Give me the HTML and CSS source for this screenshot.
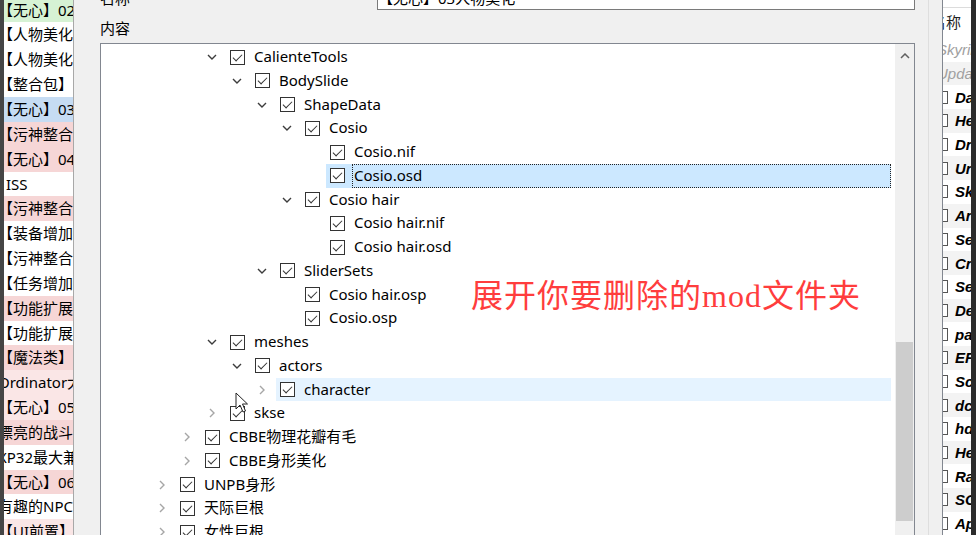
FILE: index.html
```html
<!doctype html>
<html lang="zh-CN">
<head>
  <meta charset="utf-8" />
  <meta name="viewport" content="width=device-width,initial-scale=1" />
  <title>编辑 mod 内容</title>
  <link rel="stylesheet" href="styles.css">
</head>
<body>
  <div class="window">
    <aside class="mod-list">
      <div class="mod-rows">
        <div class="mod green">【无心】02人物美化</div>
        <div class="mod">【人物美化】CBBE</div>
        <div class="mod">【人物美化】UNP</div>
        <div class="mod">【整合包】</div>
        <div class="mod blue">【无心】03人物美化</div>
        <div class="mod pink">【污神整合】</div>
        <div class="mod pink">【无心】04</div>
        <div class="mod"><span class="shift">ISS</span></div>
        <div class="mod pink">【污神整合】</div>
        <div class="mod">【装备增加】</div>
        <div class="mod">【污神整合】</div>
        <div class="mod">【任务增加】</div>
        <div class="mod pink">【功能扩展】</div>
        <div class="mod">【功能扩展】</div>
        <div class="mod pink">【魔法类】</div>
        <div class="mod pale">Ordinator大修</div>
        <div class="mod pale">【无心】05</div>
        <div class="mod pink">漂亮的战斗</div>
        <div class="mod">XP32最大兼容</div>
        <div class="mod pink">【无心】06</div>
        <div class="mod">有趣的NPC</div>
        <div class="mod pale">【UI前置】</div>
      </div>
    </aside>

    <main class="editor">
      <div class="name-field">
        <label>名称</label>
        <div class="combo">
          <span>【无心】03人物美化</span>
          <svg width="10" height="6" viewBox="0 0 10 6"><path d="M1 1 L5 5 L9 1" fill="none" stroke="#555" stroke-width="1.2"/></svg>
        </div>
      </div>
      <div class="field-label">内容</div>

      <div class="tree-box">
        <div class="tree">
          <div class="row l2"><span class="twisty open"><svg width="10" height="6" viewBox="0 0 10 6"><path d="M1 1 L5 5 L9 1"/></svg></span><span class="item"><span class="cb"></span><span class="name">CalienteTools</span></span></div>
          <div class="row l3"><span class="twisty open"><svg width="10" height="6" viewBox="0 0 10 6"><path d="M1 1 L5 5 L9 1"/></svg></span><span class="item"><span class="cb"></span><span class="name">BodySlide</span></span></div>
          <div class="row l4"><span class="twisty open"><svg width="10" height="6" viewBox="0 0 10 6"><path d="M1 1 L5 5 L9 1"/></svg></span><span class="item"><span class="cb"></span><span class="name">ShapeData</span></span></div>
          <div class="row l5"><span class="twisty open"><svg width="10" height="6" viewBox="0 0 10 6"><path d="M1 1 L5 5 L9 1"/></svg></span><span class="item"><span class="cb"></span><span class="name">Cosio</span></span></div>
          <div class="row l6"><span class="twisty"></span><span class="item"><span class="cb"></span><span class="name">Cosio.nif</span></span></div>
          <div class="row l6"><span class="twisty"></span><span class="item selected"><span class="cb"></span><span class="name focus">Cosio.osd</span></span></div>
          <div class="row l5"><span class="twisty open"><svg width="10" height="6" viewBox="0 0 10 6"><path d="M1 1 L5 5 L9 1"/></svg></span><span class="item"><span class="cb"></span><span class="name">Cosio hair</span></span></div>
          <div class="row l6"><span class="twisty"></span><span class="item"><span class="cb"></span><span class="name">Cosio hair.nif</span></span></div>
          <div class="row l6"><span class="twisty"></span><span class="item"><span class="cb"></span><span class="name">Cosio hair.osd</span></span></div>
          <div class="row l4"><span class="twisty open"><svg width="10" height="6" viewBox="0 0 10 6"><path d="M1 1 L5 5 L9 1"/></svg></span><span class="item"><span class="cb"></span><span class="name">SliderSets</span></span></div>
          <div class="row l5"><span class="twisty"></span><span class="item"><span class="cb"></span><span class="name">Cosio hair.osp</span></span></div>
          <div class="row l5"><span class="twisty"></span><span class="item"><span class="cb"></span><span class="name">Cosio.osp</span></span></div>
          <div class="row l2"><span class="twisty open"><svg width="10" height="6" viewBox="0 0 10 6"><path d="M1 1 L5 5 L9 1"/></svg></span><span class="item"><span class="cb"></span><span class="name">meshes</span></span></div>
          <div class="row l3"><span class="twisty open"><svg width="10" height="6" viewBox="0 0 10 6"><path d="M1 1 L5 5 L9 1"/></svg></span><span class="item"><span class="cb"></span><span class="name">actors</span></span></div>
          <div class="row l4"><span class="twisty closed"><svg width="6" height="10" viewBox="0 0 6 10"><path d="M1 1 L5 5 L1 9"/></svg></span><span class="item hover"><span class="cb"></span><span class="name">character</span></span></div>
          <div class="row l2"><span class="twisty closed"><svg width="6" height="10" viewBox="0 0 6 10"><path d="M1 1 L5 5 L1 9"/></svg></span><span class="item"><span class="cb"></span><span class="name">skse</span></span></div>
          <div class="row l1"><span class="twisty closed"><svg width="6" height="10" viewBox="0 0 6 10"><path d="M1 1 L5 5 L1 9"/></svg></span><span class="item"><span class="cb"></span><span class="name">CBBE物理花瓣有毛</span></span></div>
          <div class="row l1"><span class="twisty closed"><svg width="6" height="10" viewBox="0 0 6 10"><path d="M1 1 L5 5 L1 9"/></svg></span><span class="item"><span class="cb"></span><span class="name">CBBE身形美化</span></span></div>
          <div class="row l0"><span class="twisty closed"><svg width="6" height="10" viewBox="0 0 6 10"><path d="M1 1 L5 5 L1 9"/></svg></span><span class="item"><span class="cb"></span><span class="name">UNPB身形</span></span></div>
          <div class="row l0"><span class="twisty closed"><svg width="6" height="10" viewBox="0 0 6 10"><path d="M1 1 L5 5 L1 9"/></svg></span><span class="item"><span class="cb"></span><span class="name">天际巨根</span></span></div>
          <div class="row l0"><span class="twisty closed"><svg width="6" height="10" viewBox="0 0 6 10"><path d="M1 1 L5 5 L1 9"/></svg></span><span class="item"><span class="cb"></span><span class="name">女性巨根</span></span></div>
        </div>

        <div class="scrollbar">
          <div class="arrow"><svg width="10" height="6" viewBox="0 0 10 6"><path d="M1 5 L5 1 L9 5" fill="none" stroke="#606060" stroke-width="1.5"/></svg></div>
          <div class="track"><div class="thumb"></div></div>
        </div>

        <div class="hint">展开你要删除的mod文件夹</div>
        <svg class="cursor" width="14" height="22" viewBox="0 0 14 22">
          <path d="M1 1 L1 17 L5 13 L8 20 L10.5 19 L7.5 12 L12.5 12 Z" fill="#fff" stroke="#222" stroke-width="1" stroke-linejoin="round"/>
        </svg>
      </div>
    </main>

    <div class="splitter"></div>

    <aside class="plugin-list">
      <div class="plugin-head">名称</div>
      <div class="plugin-row master"><span class="pname">Skyrim.esm</span></div>
      <div class="plugin-row master"><span class="pname">Update.esm</span></div>
      <div class="plugin-row"><span class="pcb"></span><span class="pname">Dawnguard.esm</span></div>
      <div class="plugin-row"><span class="pcb"></span><span class="pname">HearthFires.esm</span></div>
      <div class="plugin-row"><span class="pcb"></span><span class="pname">Dragonborn.esm</span></div>
      <div class="plugin-row"><span class="pcb"></span><span class="pname">Ursine Armour.esp</span></div>
      <div class="plugin-row"><span class="pcb"></span><span class="pname">SkyUI.esp</span></div>
      <div class="plugin-row"><span class="pcb"></span><span class="pname">Arissa.esp</span></div>
      <div class="plugin-row"><span class="pcb"></span><span class="pname">SexLab.esm</span></div>
      <div class="plugin-row"><span class="pcb"></span><span class="pname">CreatureFramework.esm</span></div>
      <div class="plugin-row"><span class="pcb"></span><span class="pname">SexLabAroused.esm</span></div>
      <div class="plugin-row"><span class="pcb"></span><span class="pname">Devious Devices.esm</span></div>
      <div class="plugin-row"><span class="pcb"></span><span class="pname">paradise_halls.esm</span></div>
      <div class="plugin-row"><span class="pcb"></span><span class="pname">EFFCore.esm</span></div>
      <div class="plugin-row"><span class="pcb"></span><span class="pname">SchlongsOfSkyrim.esp</span></div>
      <div class="plugin-row"><span class="pcb"></span><span class="pname">dcc-soulgem-oven.esm</span></div>
      <div class="plugin-row"><span class="pcb"></span><span class="pname">hdtHighHeel.esm</span></div>
      <div class="plugin-row"><span class="pcb"></span><span class="pname">HentaiPregnancy.esm</span></div>
      <div class="plugin-row"><span class="pcb"></span><span class="pname">RaceMenu.esp</span></div>
      <div class="plugin-row"><span class="pcb"></span><span class="pname">SGHairPack.esp</span></div>
      <div class="plugin-row"><span class="pcb"></span><span class="pname">Apachii Hair.esm</span></div>
    </aside>

    <div class="frame-edge"></div>
  </div>
</body>
</html>
```

FILE: styles.css
```css
*{box-sizing:border-box}
html,body{height:100%}
body{
  margin:0;
  overflow:hidden;
  background:#f0f0f0;
  color:#000;
  font-family:"Noto Sans","Noto Sans CJK SC",sans-serif;
  font-size:15px;
}

.window{
  display:flex;
  height:535px;
  overflow:hidden;
}

/* left mod list */
.mod-list{
  flex:none;
  width:74px;
  background:#fff;
  border-left:4px solid #454545;
  border-right:1px solid #a8a8a8;
  overflow:hidden;
}
.mod-rows{margin-top:-2.4px}
.mod{
  height:24.85px;
  line-height:24.85px;
  white-space:nowrap;
  text-indent:-6px;
}
.mod .shift{margin-left:8px}
.mod.green{background:#d6f2d4}
.mod.blue{background:#c6dcf3}
.mod.pink{background:#f6d6d6}
.mod.pale{background:#fae6e6}

/* middle editor */
.editor{
  flex:none;
  width:854px;
  padding:0 13px 0 26px;
}
.name-field{
  display:grid;
  grid-template-columns:277px 1fr;
  align-items:center;
  height:26px;
  margin-top:-16px;
}
.combo{
  height:26px;
  display:flex;
  align-items:center;
  justify-content:space-between;
  padding:0 9px 0 0;
  background:#fff;
  border:1px solid #7a7a7a;
}
.field-label{
  padding-top:6px;
  line-height:24px;
  height:33px;
}

.tree-box{
  position:relative;
  display:flex;
  height:520px;
  background:#fff;
  border:1px solid #828790;
  overflow:hidden;
}
.tree{
  flex:none;
  width:790px;
  padding-top:1.2px;
  margin-right:4px;
}
.row{
  display:flex;
  align-items:center;
  height:23.75px;
  white-space:nowrap;
}
.l0{padding-left:53px}
.l1{padding-left:78px}
.l2{padding-left:103px}
.l3{padding-left:128px}
.l4{padding-left:153px}
.l5{padding-left:178px}
.l6{padding-left:203px}

.twisty{
  flex:none;
  width:16px;
  height:100%;
  margin-right:6px;
  display:flex;
  align-items:center;
  justify-content:center;
}
.twisty svg path{fill:none;stroke-width:1.4}
.twisty.open svg path{stroke:#3c3c3c}
.twisty.closed svg path{stroke:#a6a6a6}

.item{
  flex:1;
  display:flex;
  align-items:center;
  gap:9px;
  height:100%;
  padding-left:4px;
}
.item.selected{background:#cce8ff}
.item.hover{background:#e5f3ff}

.cb{
  position:relative;
  flex:none;
  width:15px;
  height:15px;
  border:1px solid #333;
  background:#fff;
}
.cb::after{
  content:'';
  position:absolute;
  left:4px;
  top:1px;
  width:4px;
  height:8px;
  border:solid #333;
  border-width:0 1.4px 1.4px 0;
  transform:rotate(45deg);
}
.name{line-height:23.75px}
.name.focus{
  flex:1;
  height:100%;
  margin-left:-2px;
  padding-left:1px;
  border:1px dotted #222;
  line-height:21.75px;
}

.scrollbar{
  flex:none;
  width:19px;
  display:flex;
  flex-direction:column;
  background:#f0f0f0;
}
.scrollbar .arrow{
  height:24px;
  display:flex;
  align-items:center;
  justify-content:center;
}
.track{flex:1;padding:0 1px}
.thumb{
  margin-top:274px;
  height:179px;
  background:#cdcdcd;
}

.hint{
  position:absolute;
  left:370px;
  top:232px;
  font-family:"Liberation Serif","Noto Sans CJK SC",serif;
  font-size:32px;
  line-height:40px;
  letter-spacing:1px;
  color:#ff3d3d;
  white-space:nowrap;
}
.cursor{
  position:absolute;
  left:134px;
  top:348px;
}

/* splitter + right plugin list */
.splitter{
  flex:none;
  width:14px;
  border-left:1px solid #dedede;
  background:#f0f0f0;
}
.plugin-list{
  flex:none;
  width:29px;
  padding-top:7px;
  background:#fff;
  border-left:1px solid #828790;
  overflow:hidden;
}
.plugin-head{
  height:31px;
  line-height:28px;
  border-top:1px solid #dcdcdc;
  text-indent:-12px;
  white-space:nowrap;
  color:#222;
}
.plugin-row{
  display:flex;
  align-items:center;
  gap:7px;
  height:23.7px;
  margin-left:-8px;
  white-space:nowrap;
  font-family:"Liberation Sans",sans-serif;
  font-style:italic;
  font-weight:700;
  font-size:15px;
}
.plugin-row:nth-child(odd){background:#f3f3f3}
.plugin-row.master{
  padding-left:2px;
  font-weight:400;
  color:#a0a0a0;
}
.pcb{
  flex:none;
  width:13px;
  height:13px;
  border:1px solid #555;
  background:#fff;
}
.frame-edge{
  flex:none;
  width:5px;
  background:#2b2b2b;
}
```
